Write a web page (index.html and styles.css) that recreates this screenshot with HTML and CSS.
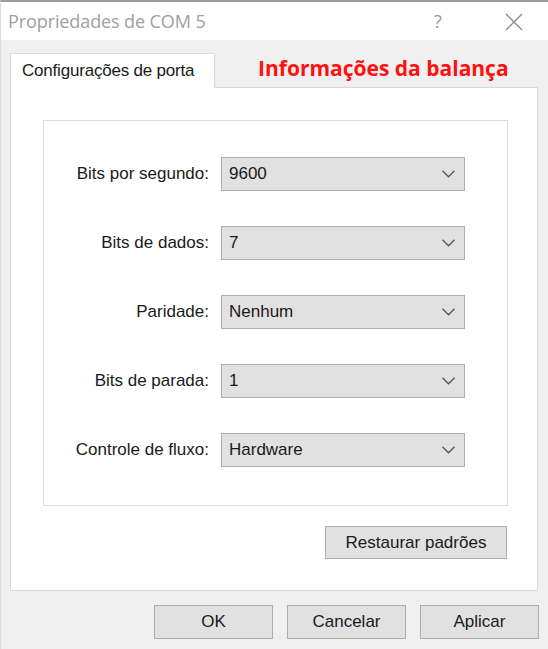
FILE: index.html
```html
<!DOCTYPE html>
<html>
<head>
<meta charset="UTF-8">
<title>Propriedades de COM 5</title>
<link rel="stylesheet" href="styles.css">
</head>
<body>
	<div class="window">
		<div class="titlebar">
			<span class="title">Propriedades de COM 5</span>
			<span class="help">?</span>
			<span class="close">
				<svg width="18" height="18" viewBox="0 0 18 18"><path d="M1 1 L17 17 M17 1 L1 17" stroke="#8a8a8a" stroke-width="1.3" fill="none"/></svg>
			</span>
		</div>

		<div class="tabs">
			<div class="tab">Configurações de porta</div>
			<div class="note">Informações da balança</div>
		</div>

		<div class="panel">
			<div class="group">
				<label>Bits por segundo:</label>
				<div class="combo"><span>9600</span><svg class="chev" width="13" height="8" viewBox="0 0 13 8"><path d="M0.5 0.8 L6.5 6.8 L12.5 0.8" stroke="#555" stroke-width="1.3" fill="none"/></svg></div>

				<label>Bits de dados:</label>
				<div class="combo"><span>7</span><svg class="chev" width="13" height="8" viewBox="0 0 13 8"><path d="M0.5 0.8 L6.5 6.8 L12.5 0.8" stroke="#555" stroke-width="1.3" fill="none"/></svg></div>

				<label>Paridade:</label>
				<div class="combo"><span>Nenhum</span><svg class="chev" width="13" height="8" viewBox="0 0 13 8"><path d="M0.5 0.8 L6.5 6.8 L12.5 0.8" stroke="#555" stroke-width="1.3" fill="none"/></svg></div>

				<label>Bits de parada:</label>
				<div class="combo"><span>1</span><svg class="chev" width="13" height="8" viewBox="0 0 13 8"><path d="M0.5 0.8 L6.5 6.8 L12.5 0.8" stroke="#555" stroke-width="1.3" fill="none"/></svg></div>

				<label>Controle de fluxo:</label>
				<div class="combo"><span>Hardware</span><svg class="chev" width="13" height="8" viewBox="0 0 13 8"><path d="M0.5 0.8 L6.5 6.8 L12.5 0.8" stroke="#555" stroke-width="1.3" fill="none"/></svg></div>
			</div>
			<div class="restore-row">
				<button class="btn restore">Restaurar padrões</button>
			</div>
		</div>

		<div class="actions">
			<button class="btn">OK</button>
			<button class="btn">Cancelar</button>
			<button class="btn">Aplicar</button>
		</div>
	</div>
</body>
</html>
```

FILE: styles.css
```css
body {
	margin: 0;
	font-family: "Liberation Sans", Arial, sans-serif;
	font-size: 17px;
	color: #1a1a1a;
}

.window {
	width: 547px;
	height: 647px;
	background: #f0f0f0;
	border-top: 2px solid #9c9c9c;
	border-left: 1px solid #dcdcdc;
	overflow: hidden
}

.titlebar {
	height: 38px;
	background: #fff;
	display: flex;
	align-items: center;
	position: relative
}

.title {
	margin-left: 7px;
	color: #a0a0a0;
	font-family: "Open Sans", sans-serif;
	font-size: 18px;
	letter-spacing: -0.1px
}

.help {
	position: absolute;
	left: 433px;
	top: 7px;
	color: #999;
	font-family: "Open Sans", sans-serif;
	font-size: 18px
}

.close {
	position: absolute;
	left: 504px;
	top: 11px
}

.tabs {
	display: flex;
	align-items: flex-start;
	height: 34px;
	margin: 13px 0 0 9px
}

.tab {
	position: relative;
	z-index: 1;
	width: 205px;
	height: 35px;
	background: #fff;
	border: 1px solid #d9d9d9;
	border-bottom: none;
	box-sizing: border-box;
	padding: 7px 0 0 11px;
	letter-spacing: -0.2px
}

.note {
	margin: 1px 0 0 43px;
	line-height: 28px;
	color: #ff1010;
	font-family: "Open Sans", sans-serif;
	font-weight: bold;
	font-size: 21px
}

.panel {
	margin-left: 9px;
	width: 528px;
	height: 504px;
	box-sizing: border-box;
	background: #fff;
	border: 1px solid #d9d9d9
}

.group {
	margin: 32px 0 0 32px;
	width: 465px;
	height: 386px;
	box-sizing: border-box;
	border: 1px solid #dcdcdc;
	padding-top: 36px;
	display: grid;
	grid-template-columns: 165px 244px;
	column-gap: 12px;
	row-gap: 35px;
	align-content: start
}

label {
	text-align: right;
	align-self: center
}

.combo {
	height: 34px;
	box-sizing: border-box;
	background: #e1e1e1;
	border: 1px solid #adadad;
	display: flex;
	align-items: center;
	padding: 0 0 0 7px
}

.combo span {
	flex: 1
}

.chev {
	margin: 0 9px 1px 0
}

.restore-row {
	display: flex;
	justify-content: flex-end;
	margin: 20px 30px 0 0
}

.btn {
	font-family: "Liberation Sans", Arial, sans-serif;
	font-size: 17px;
	color: #1a1a1a;
	background: #e1e1e1;
	border: 1px solid #adadad;
	height: 34px;
	width: 119px;
	padding: 0
}

.restore {
	width: 182px;
	height: 33px
}

.actions {
	display: flex;
	justify-content: flex-end;
	gap: 14px;
	margin: 14px 9px 0 0
}
```
